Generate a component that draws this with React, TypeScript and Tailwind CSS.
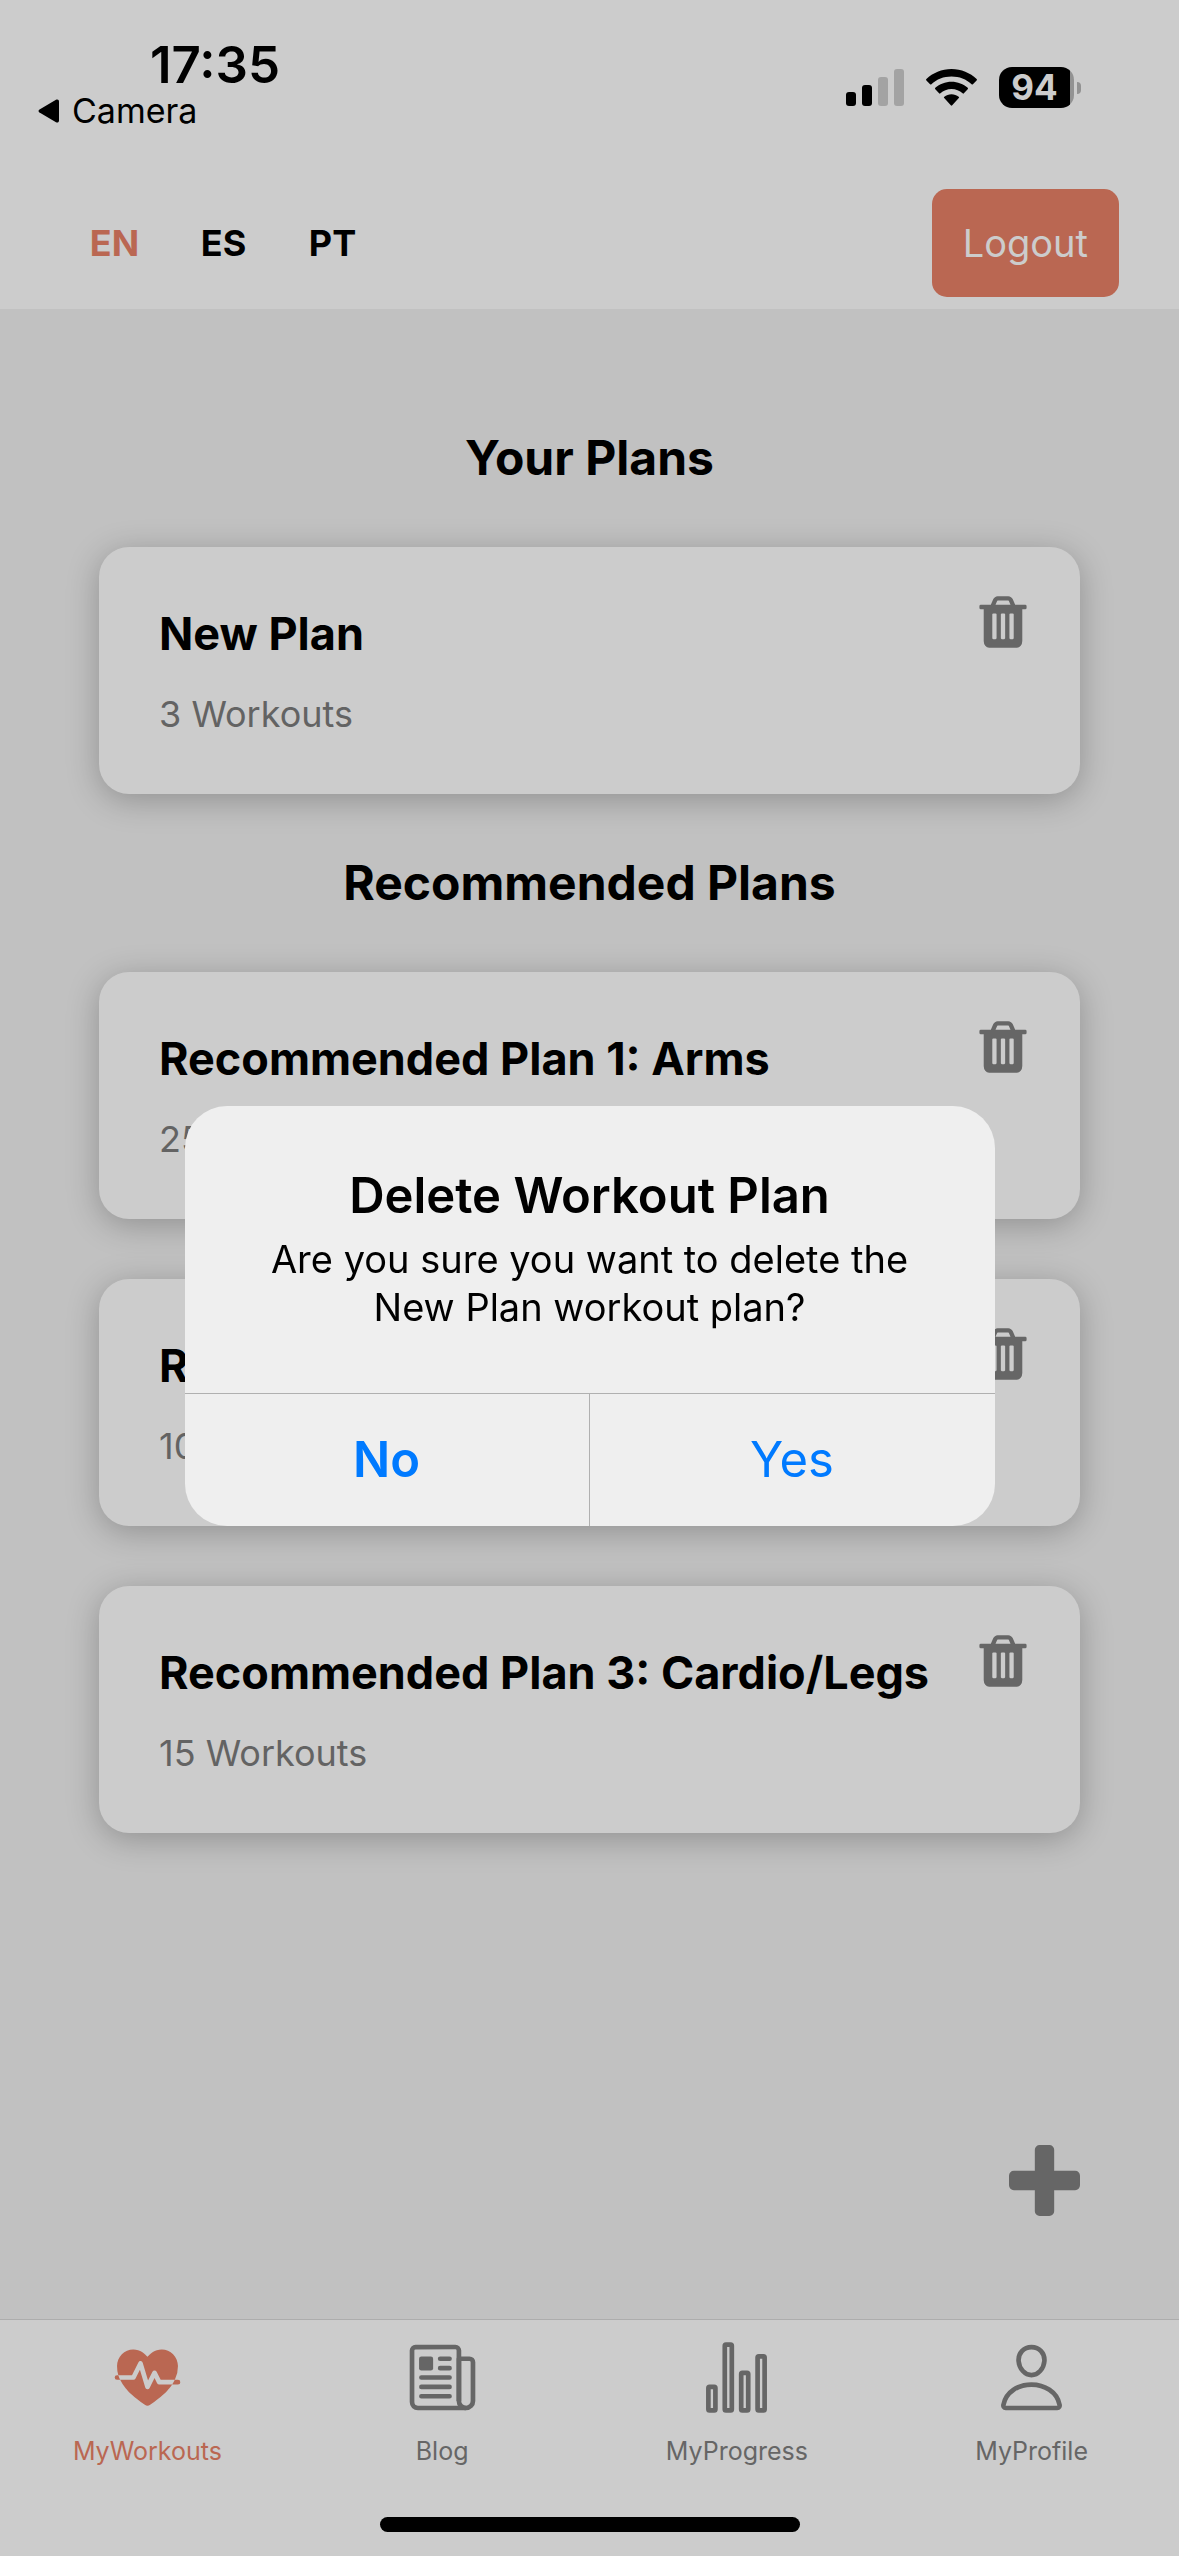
import React, { useState } from "react";
import {
  IoFitness,
  IoNewspaperOutline,
  IoPersonOutline,
  IoStatsChartOutline,
} from "react-icons/io5";

type Plan = { name: string; workouts: number };

const yourPlans: Plan[] = [{ name: "New Plan", workouts: 3 }];

const recommendedPlans: Plan[] = [
  { name: "Recommended Plan 1: Arms", workouts: 25 },
  { name: "Recommended Plan 2: Abs", workouts: 10 },
  { name: "Recommended Plan 3: Cardio/Legs", workouts: 15 },
];

const tabs = [
  { label: "MyWorkouts", Icon: IoFitness },
  { label: "Blog", Icon: IoNewspaperOutline },
  { label: "MyProgress", Icon: IoStatsChartOutline },
  { label: "MyProfile", Icon: IoPersonOutline },
];

function TrashIcon() {
  return (
    <svg viewBox="0 0 1792 1792" className="size-[60px] fill-current" aria-hidden="true">
      <path d="M704 1376v-704q0-14-9-23t-23-9h-64q-14 0-23 9t-9 23v704q0 14 9 23t23 9h64q14 0 23-9t9-23zm256 0v-704q0-14-9-23t-23-9h-64q-14 0-23 9t-9 23v704q0 14 9 23t23 9h64q14 0 23-9t9-23zm256 0v-704q0-14-9-23t-23-9h-64q-14 0-23 9t-9 23v704q0 14 9 23t23 9h64q14 0 23-9t9-23zm-544-992h448l-48-117q-7-9-17-11h-317q-10 2-17 11zm928 32v64q0 14-9 23t-23 9h-96v948q0 83-47 143.5t-113 60.5h-832q-66 0-113-58.5t-47-141.5v-952h-96q-14 0-23-9t-9-23v-64q0-14 9-23t23-9h309l70-167q15-37 54-63t79-26h320q40 0 79 26t54 63l70 167h309q14 0 23 9t9 23z" />
    </svg>
  );
}

function PlusIcon() {
  return (
    <svg viewBox="192 192 1408 1408" className="size-[71px] fill-current" aria-hidden="true">
      <path d="M1600 800v192q0 40-28 68t-68 28h-416v416q0 40-28 68t-68 28h-192q-40 0-68-28t-28-68v-416h-416q-40 0-68-28t-28-68v-192q0-40 28-68t68-28h416v-416q0-40 28-68t68-28h192q40 0 68 28t28 68v416h416q40 0 68 28t28 68z" />
    </svg>
  );
}

function SignalIcon() {
  return (
    <svg viewBox="0 0 58 37" className="h-[37px] w-[58px]" aria-hidden="true">
      <rect x="0" y="23" width="10" height="14" rx="3" />
      <rect x="16" y="16" width="10" height="21" rx="3" />
      <rect x="32" y="8" width="10" height="29" rx="3" fill="#a3a3a3" />
      <rect x="48" y="0" width="10" height="37" rx="3" fill="#a3a3a3" />
    </svg>
  );
}

function WifiIcon() {
  return (
    <svg viewBox="0 0 51 37" className="h-[37px] w-[51px]" aria-hidden="true">
      <path d="M25.5 0C35.3 0 44.200 3.800 50.600 10.100a.9.9 0 0 1 0 1.300L46.900 15.200a.9.9 0 0 1-1.300 0C40.400 10.200 33.300 7.500 25.500 7.500S10.600 10.200 5.400 15.200a.9.9 0 0 1-1.300 0L.4 11.400a.9.9 0 0 1 0-1.300C6.800 3.800 15.700 0 25.500 0z" />
      <path d="M25.500 12.700c6.200 0 11.900 2.300 16.200 6.100a1 1 0 0 1 0 1.400l-3.800 4.100a.9.9 0 0 1-1.300 0c-2.900-2.600-6.800-4.200-11.100-4.200s-8.200 1.600-11.100 4.200a.9.9 0 0 1-1.300 0l-3.800-4.100a1 1 0 0 1 0-1.400c4.300-3.800 10-6.100 16.200-6.100z" />
      <path d="M25.500 25.200c2.700 0 5.200.9 7.200 2.500a.9.9 0 0 1 .1 1.400L26.200 36.300a1 1 0 0 1-1.400 0L18.200 29.100a.9.9 0 0 1 .1-1.400c2-1.600 4.500-2.500 7.200-2.500z" />
    </svg>
  );
}

function Battery() {
  return (
    <div className="flex items-center gap-[3px]">
      <div className="flex h-[41px] w-[75px] items-center justify-center overflow-hidden rounded-[13px] bg-[linear-gradient(to_right,#000_71px,#929292_71px)] pr-1 text-[35px] leading-none font-bold text-[#ccc]">
        94
      </div>
      <div className="h-3 w-1 rounded-r-full bg-[#929292]" />
    </div>
  );
}

function StatusBar() {
  return (
    <div className="flex items-start justify-between pr-[98px] pl-[38px]">
      <div className="pt-[34px]">
        <div className="pl-[112px] text-[51px] leading-[62px] font-semibold">17:35</div>
        <button type="button" className="flex items-center gap-[13px] text-[34px] leading-[30px]">
          <svg viewBox="0 0 21 24" className="h-6 w-[21px]" aria-hidden="true">
            <path d="M1.500 10.500 18 .8c1.600-.9 3 0 3 1.700v19c0 1.700-1.400 2.600-3 1.700L1.500 13.500c-1.300-.8-1.300-2.200 0-3z" />
          </svg>
          Camera
        </button>
      </div>
      <div className="flex items-center pt-[67px]">
        <SignalIcon />
        <div className="px-[22px]">
          <WifiIcon />
        </div>
        <Battery />
      </div>
    </div>
  );
}

function Header() {
  const [language, setLanguage] = useState("EN");
  return (
    <header className="bg-[#ccc]">
      <StatusBar />
      <div className="flex items-center justify-between px-[60px] pt-[63px] pb-3">
        <div className="flex">
          {["EN", "ES", "PT"].map((code) => (
            <button
              key={code}
              type="button"
              onClick={() => setLanguage(code)}
              className={
                language === code
                  ? "w-[109px] text-[36px] font-bold text-[#ba6752]"
                  : "w-[109px] text-[36px] font-bold"
              }
            >
              {code}
            </button>
          ))}
        </div>
        <button
          type="button"
          className="h-[108px] rounded-[15px] bg-[#ba6752] px-[31px] text-[38px] text-[#ccc]"
        >
          Logout
        </button>
      </div>
    </header>
  );
}

function PlanCard({ plan }: { plan: Plan }) {
  return (
    <li className="flex items-start justify-between rounded-[30px] bg-[#ccc] pt-[45px] pr-[47px] pb-[58px] pl-[60px] shadow-[0_6px_32px_rgba(0,0,0,0.25)]">
      <div>
        <h3 className="pt-3 text-[45px] leading-[60px] font-bold">{plan.name}</h3>
        <p className="pt-7 text-[36px] leading-[44px] text-[#636363]">{plan.workouts} Workouts</p>
      </div>
      <button type="button" aria-label={"Delete " + plan.name} className="text-[#666]">
        <TrashIcon />
      </button>
    </li>
  );
}

function PlanSection({ title, plans }: { title: string; plans: Plan[] }) {
  return (
    <section>
      <h2 className="py-[60px] text-center text-[48px] leading-[58px] font-bold">{title}</h2>
      <ul className="flex flex-col gap-[60px]">
        {plans.map((plan) => (
          <PlanCard key={plan.name} plan={plan} />
        ))}
      </ul>
    </section>
  );
}

function TabBar() {
  return (
    <nav className="border-t border-[#adadad] bg-[#ccc]">
      <div className="grid grid-cols-4 pt-5">
        {tabs.map(({ label, Icon }, i) => (
          <a
            key={label}
            href={"#" + label}
            className={
              i === 0
                ? "flex flex-col items-center gap-4 text-[25px] leading-[40px] text-[#ba6752]"
                : "flex flex-col items-center gap-4 text-[25px] leading-[40px] text-[#666]"
            }
          >
            <Icon className="size-[75px]" />
            {label}
          </a>
        ))}
      </div>
      <div className="flex justify-center pt-[46px] pb-6">
        <div className="h-[15px] w-[420px] rounded-full bg-black" />
      </div>
    </nav>
  );
}

function DeleteDialog({ onClose }: { onClose: () => void }) {
  return (
    <div className="fixed inset-0 flex items-center justify-center pt-[75px]">
      <div
        role="alertdialog"
        aria-labelledby="delete-title"
        aria-describedby="delete-message"
        className="w-[810px] overflow-hidden rounded-[42px] bg-[#efefef] text-center"
      >
        <div className="px-12 pt-[59px] pb-[62px]">
          <h2 id="delete-title" className="text-[49px] leading-[62px] font-semibold">
            Delete Workout Plan
          </h2>
          <p id="delete-message" className="pt-2 text-[38px] leading-[48px]">
            Are you sure you want to delete the
            <br />
            New Plan workout plan?
          </p>
        </div>
        <div className="grid grid-cols-2 border-t border-[#b0b0b0] text-[49px] text-[#007aff]">
          <button type="button" onClick={onClose} className="h-[132px] border-r border-[#b0b0b0] font-semibold">
            No
          </button>
          <button type="button" onClick={onClose} className="h-[132px]">
            Yes
          </button>
        </div>
      </div>
    </div>
  );
}

export default function App() {
  const [confirming, setConfirming] = useState(true);
  return (
    <div className="flex min-h-screen flex-col bg-[#c1c1c1] font-['Inter',sans-serif] text-black">
      <Header />
      <main className="flex grow flex-col px-[99px] pt-[60px]">
        <PlanSection title="Your Plans" plans={yourPlans} />
        <PlanSection title="Recommended Plans" plans={recommendedPlans} />
        <div className="mt-auto flex justify-end pb-[103px] text-[#666]">
          <button type="button" aria-label="Add plan">
            <PlusIcon />
          </button>
        </div>
      </main>
      <TabBar />
      {confirming && <DeleteDialog onClose={() => setConfirming(false)} />}
    </div>
  );
}
